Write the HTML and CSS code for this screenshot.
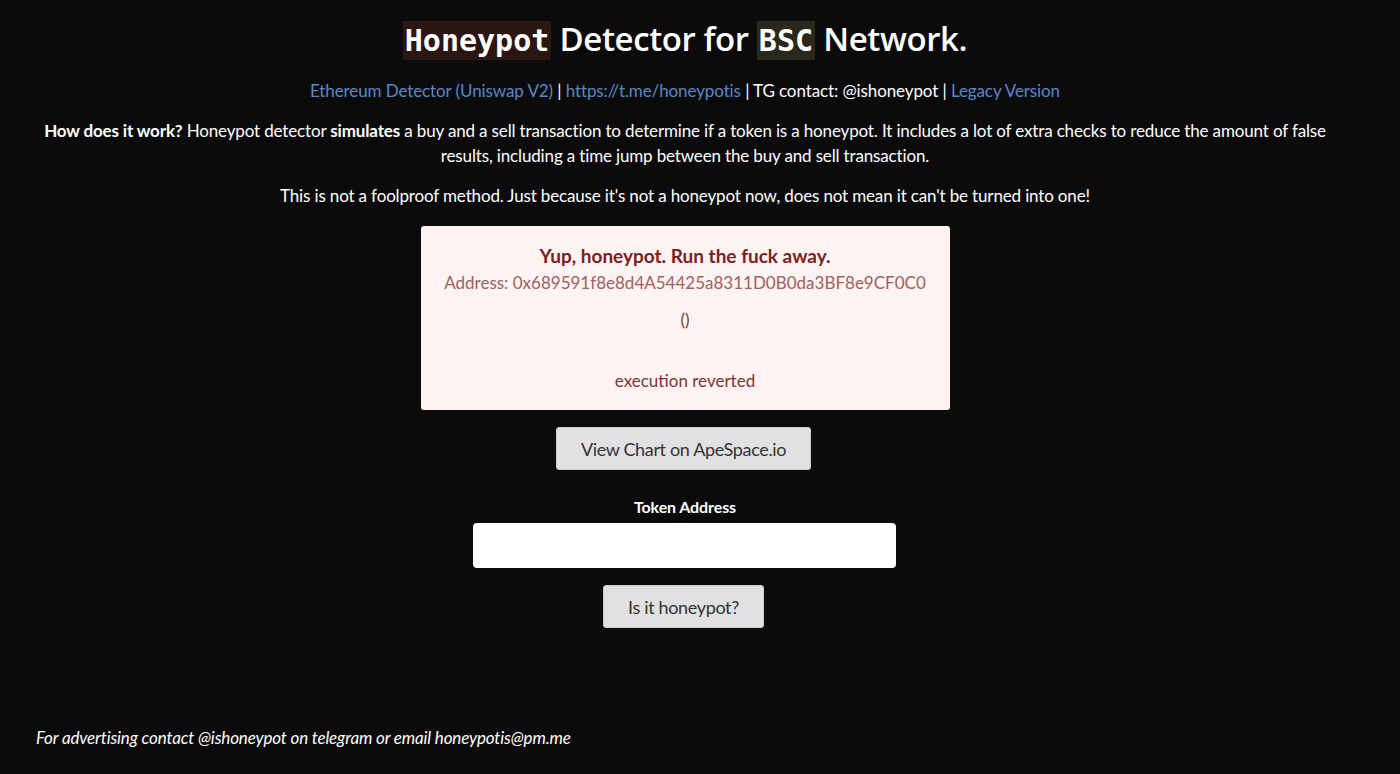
FILE: index.html
```html
<!DOCTYPE html>
<html>
<head>
  <title>Honeypot Detector</title>
  <link rel="stylesheet" href="styles.css">
</head>
<body>
  <div id="page">
    <h1 class="title"><code class="tagRed">Honeypot</code> Detector for <code class="tagOlive">BSC</code> Network.</h1>

    <p class="links">
      <a href="#">Ethereum Detector (Uniswap V2)</a> | <a href="#">https://t.me/honeypotis</a> | TG contact: @ishoneypot | <a href="#">Legacy Version</a>
    </p>

    <p class="intro">
      <b>How does it work?</b> Honeypot detector <b>simulates</b> a buy and a sell transaction to determine if a token is a honeypot. It includes a lot of extra checks to reduce the amount of false results, including a time jump between the buy and sell transaction.
    </p>

    <p class="intro">This is not a foolproof method. Just because it's not a honeypot now, does not mean it can't be turned into one!</p>

    <div id="result">
      <div class="resultTitle">Yup, honeypot. Run the fuck away.</div>
      <div class="resultAddress">Address: 0x689591f8e8d4A54425a8311D0B0da3BF8e9CF0C0</div>
      <p class="resultText">()</p>
      <p class="resultText resultError">execution reverted</p>
    </div>

    <button class="greyButton" id="chartButton">View Chart on ApeSpace.io</button>

    <label class="fieldLabel" for="tokenInput">Token Address</label>
    <input type="text" id="tokenInput">

    <button class="greyButton" id="checkButton">Is it honeypot?</button>

    <p class="footer">For advertising contact @ishoneypot on telegram or email honeypotis@pm.me</p>
  </div>
</body>
</html>
```

FILE: styles.css
```css
body {
  margin: 0;
  background-color: #0b0b0b;
  color: white;
  font-family: Lato, "Liberation Sans", sans-serif;
}

#page {
  width: 1370px;
  display: flex;
  flex-direction: column;
  align-items: center;
  text-align: center;
}

.title {
  margin: 18px 0 0 0;
  font-family: "Open Sans", "Noto Sans", sans-serif;
  font-size: 33px;
  font-weight: 600;
  line-height: 42px;
  letter-spacing: -0.4px;
}

.title code {
  font-family: "DejaVu Sans Mono", monospace;
  font-size: 30px;
  font-weight: bold;
  padding: 2px 2px;
  letter-spacing: 0;
}

.tagRed {
  background-color: #2a1613;
}

.tagOlive {
  background-color: #2a281a;
}

.links {
  margin: 17px 0 0 0;
  font-size: 17px;
  line-height: 24px;
  letter-spacing: -0.1px;
}

.links a {
  color: #5c87c6;
  text-decoration: none;
}

.intro {
  margin: 15px 35px 0 35px;
  font-size: 17px;
  line-height: 25px;
  letter-spacing: -0.15px;
}

.intro + .intro {
  margin-top: 15px;
}

#result {
  box-sizing: border-box;
  width: 529px;
  margin-top: 18px;
  padding: 17px 10px 17px 10px;
  background-color: #fdf3f3;
  border-radius: 3px;
  color: #7b3535;
}

.resultTitle {
  font-size: 19px;
  font-weight: bold;
  color: #7a2020;
  line-height: 26px;
}

.resultAddress {
  font-size: 17px;
  line-height: 27px;
  color: #a06060;
}

.resultText {
  margin: 12px 0 0 0;
  font-size: 17px;
  line-height: 24px;
}

.resultError {
  margin-top: 37px;
}

.greyButton {
  font-family: Lato, "Liberation Sans", sans-serif;
  background-color: #e1e1e3;
  color: #333;
  border: 1px solid #cfcfd2;
  border-radius: 3px;
  font-size: 18px;
  letter-spacing: -0.35px;
  cursor: pointer;
}

#chartButton {
  margin: 17px 3px 0 0;
  width: 255px;
  height: 43px;
}

.fieldLabel {
  margin-top: 28px;
  font-size: 16px;
  font-weight: bold;
  line-height: 18px;
  letter-spacing: -0.1px;
}

#tokenInput {
  box-sizing: border-box;
  margin: 7px 1px 0 0;
  width: 423px;
  height: 45px;
  border: none;
  border-radius: 4px;
  background-color: white;
}

#checkButton {
  margin: 17px 3px 0 0;
  width: 161px;
  height: 43px;
}

.footer {
  align-self: flex-start;
  margin: 100px 0 0 36px;
  font-size: 17px;
  font-style: italic;
  line-height: 20px;
  letter-spacing: -0.15px;
}
```
